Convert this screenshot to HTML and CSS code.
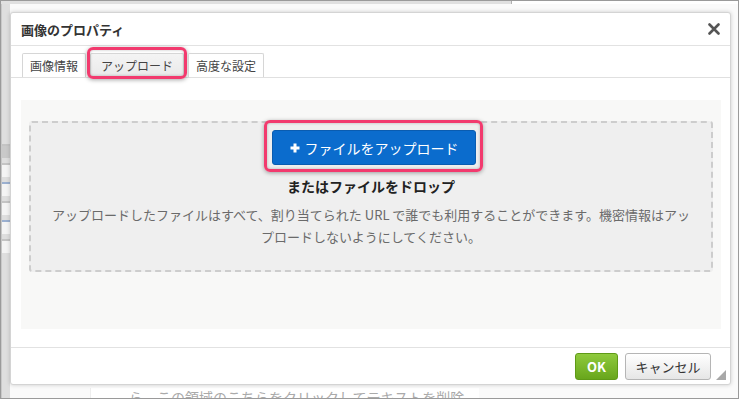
FILE: index.html
```html
<!DOCTYPE html>
<html lang="ja">
<head>
  <meta charset="UTF-8">
  <title>画像のプロパティ</title>
  <link rel="stylesheet" href="styles.css">
</head>
<body>
  <div class="frame">
    <!-- 背後のページ -->
    <div class="page">
      <div class="page-top"></div>
      <div class="page-main">
        <div class="page-side">
          <span class="side-chip dark"></span>
          <span class="side-chip"></span>
          <span class="side-chip link"></span>
          <span class="side-chip"></span>
          <span class="side-chip link"></span>
          <span class="side-chip"></span>
        </div>
        <div class="page-body">
          <div class="page-note">ら、この領域のこちらをクリックしてテキストを削除</div>
        </div>
      </div>
    </div>

    <!-- ダイアログ -->
    <div class="dialog">
      <div class="dialog-head">
        <span class="dialog-title">画像のプロパティ</span>
        <span class="dialog-close">
          <svg width="12" height="12" viewBox="0 0 12 12"><path d="M1.5 1.5L10.5 10.5M10.5 1.5L1.5 10.5" stroke="#555" stroke-width="2.6" stroke-linecap="round"/></svg>
        </span>
      </div>
      <div class="tabs">
        <span class="tab">画像情報</span>
        <span class="tab active">アップロード<span class="mark"></span></span>
        <span class="tab">高度な設定</span>
      </div>
      <div class="dialog-body">
        <div class="panel">
          <div class="dropzone">
            <button class="upload-btn" type="button">
              <svg width="10" height="10" viewBox="0 0 10 10"><path d="M5 0.5V9.5M0.5 5H9.5" stroke="#fff" stroke-width="3"/></svg>
              ファイルをアップロード
              <span class="mark"></span>
            </button>
            <div class="drop-label">またはファイルをドロップ</div>
            <p class="drop-note">アップロードしたファイルはすべて、割り当てられた URL で誰でも利用することができます。機密情報はアップロードしないようにしてください。</p>
          </div>
        </div>
      </div>
      <div class="dialog-foot">
        <button class="btn ok" type="button">OK</button>
        <button class="btn cancel" type="button">キャンセル</button>
      </div>
      <span class="resize"></span>
    </div>
  </div>
</body>
</html>
```

FILE: styles.css
```css
/* 全体 */
body {
  margin: 0;
  font-family: "Noto Sans CJK JP", "Noto Sans", sans-serif;
  color: #333;
}
.frame {
  position: relative;
  width: 739px;
  height: 399px;
  box-sizing: border-box;
  border: 1px solid #9a9a9a;
  overflow: hidden;
  background: #fff;
}

/* 背後のページ */
.page {
  display: flex;
  flex-direction: column;
  height: 100%;
}
.page-top {
  width: 510px;
  height: 3px;
  background: #e0e0e0;
  border-right: 1px solid #b0b0b0;
  flex: none;
}
.page-main {
  flex: 1;
  display: flex;
}
.page-side {
  width: 8px;
  background: #dedede;
  border-left: 1px solid #c8c8c8;
  display: flex;
  flex-direction: column;
  gap: 5px;
  padding-top: 140px;
}
.side-chip {
  display: block;
  height: 12px;
  background: #f4f4f4;
  border-top: 2px solid #c4c4c4;
}
.side-chip.dark {
  background: #c9c9c9;
}
.side-chip.link {
  border-top-color: #9bb0d0;
}
.page-body {
  flex: 1;
  display: flex;
  flex-direction: column;
  justify-content: flex-end;
  background: #fafafa;
}
.page-note {
  margin: 0 0 -12px 80px;
  width: 350px;
  height: 22px;
  padding-left: 38px;
  background: #fff;
  border-left: 1px solid #eee;
  font-size: 14px;
  line-height: 18px;
  color: #aaa;
  white-space: nowrap;
}

/* ダイアログ */
.dialog {
  position: absolute;
  left: 9px;
  top: 11px;
  width: 721px;
  height: 373px;
  box-sizing: border-box;
  background: #fff;
  border: 1px solid #d4d4d4;
  border-radius: 3px;
  box-shadow: 0 0 4px rgba(0, 0, 0, 0.18);
  display: flex;
  flex-direction: column;
}
.dialog-head {
  height: 32px;
  flex: none;
  display: flex;
  align-items: center;
  justify-content: space-between;
  padding: 0 10px 0 10px;
  border-bottom: 1px solid #e2e2e2;
}
.dialog-title {
  font-size: 13px;
  font-weight: bold;
  color: #333;
  line-height: 16px;
  padding-top: 1px;
}
.dialog-close {
  display: flex;
}

/* タブ */
.tabs {
  height: 31px;
  flex: none;
  display: flex;
  align-items: flex-end;
  gap: 4px;
  padding-left: 11px;
  border-bottom: 1px solid #e0e0e0;
}
.tab {
  position: relative;
  height: 23px;
  padding: 0 7px;
  border: 1px solid #d6d6d6;
  border-bottom: none;
  border-radius: 2px 2px 0 0;
  background: #fff;
  font-size: 12px;
  line-height: 23px;
  color: #444;
}
.tab.active {
  background: linear-gradient(#f4f4f4, #e9e9e9);
  padding: 0 10px;
}
/* 注釈の枠 */
.mark {
  position: absolute;
  border: 3px solid #f23a6e;
  border-radius: 6px;
  box-shadow: 0 1px 4px rgba(0, 0, 0, 0.35), inset 0 0 3px rgba(0, 0, 0, 0.25);
  pointer-events: none;
}
.tab .mark {
  left: -4px;
  right: -4px;
  top: -7px;
  bottom: -2px;
}

/* 本文 */
.dialog-body {
  padding: 22px 9px 0 10px;
}
.panel {
  height: 229px;
  box-sizing: border-box;
  background: #f8f8f7;
  padding: 21px 8px 0 8px;
}
.dropzone {
  height: 151px;
  box-sizing: border-box;
  border: 2px dashed #cdcdcd;
  border-radius: 3px;
  background: #efefef;
  display: flex;
  flex-direction: column;
  align-items: center;
  padding: 7px 0 0;
}
.upload-btn {
  position: relative;
  width: 204px;
  height: 35px;
  margin-left: 6px;
  border: 1px solid #0a5cb0;
  border-radius: 3px;
  background: #0b6ccd;
  color: #fff;
  font-family: inherit;
  font-size: 14px;
  display: flex;
  align-items: center;
  justify-content: center;
  gap: 5px;
  padding: 0;
}
.upload-btn .mark {
  left: -9px;
  right: -8px;
  top: -11px;
  bottom: -8px;
}
.drop-label {
  margin-top: 12px;
  font-size: 14px;
  font-weight: bold;
  line-height: 18px;
  color: #222;
}
.drop-note {
  margin: 9px 0 0;
  width: 648px;
  text-align: center;
  font-size: 13px;
  line-height: 22px;
  color: #6a6a6a;
}

/* フッター */
.dialog-foot {
  margin-top: auto;
  display: flex;
  justify-content: flex-end;
  gap: 7px;
  padding: 5px 19px 4px 0;
  border-top: 1px solid #e2e2e2;
}
.btn {
  height: 27px;
  border-radius: 3px;
  font-family: inherit;
  font-size: 13px;
  padding: 0;
}
.btn.ok {
  width: 43px;
  border: 1px solid #5f9a17;
  background: linear-gradient(#8fca3d, #68a61c);
  color: #fff;
  font-weight: bold;
}
.btn.cancel {
  width: 86px;
  border: 1px solid #b5b5b5;
  background: linear-gradient(#fff, #e6e6e6);
  color: #333;
}
.resize {
  position: absolute;
  right: 4px;
  bottom: 4px;
  width: 0;
  height: 0;
  border-left: 10px solid transparent;
  border-bottom: 10px solid #a8a8a8;
}
```
